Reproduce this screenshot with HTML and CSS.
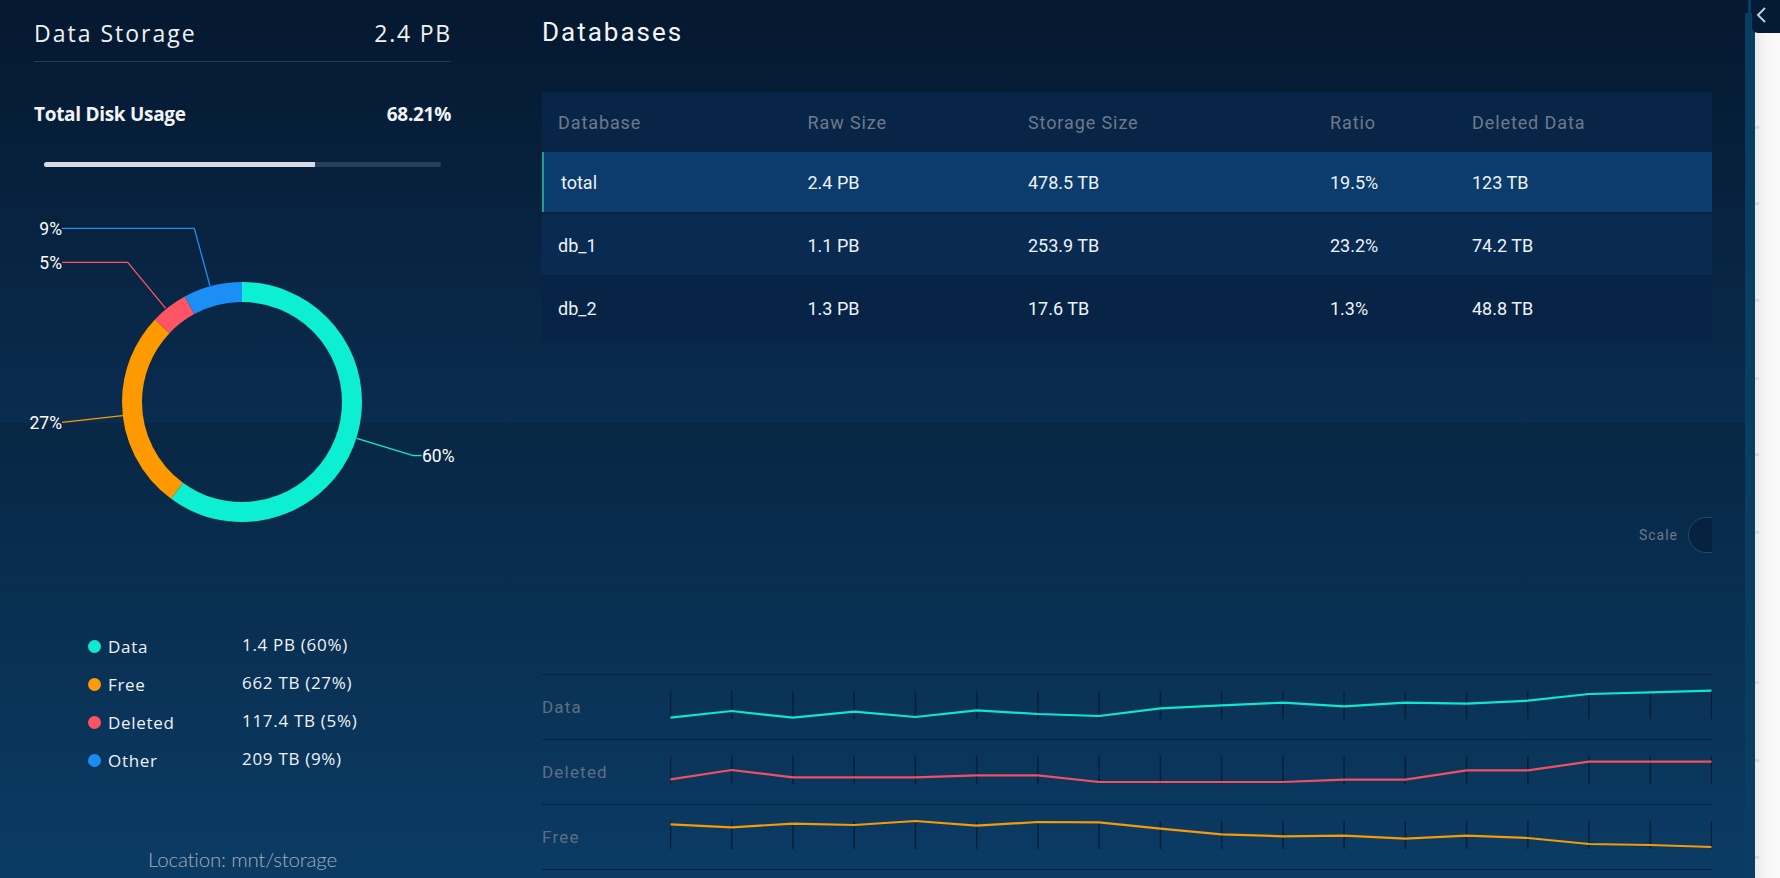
FILE: index.html
```html
<!DOCTYPE html>
<html lang="en">
<head>
<meta charset="utf-8">
<title>Data Storage</title>
<link rel="stylesheet" href="styles.css">
</head>
<body>
<div class="app">
  <main class="main">
    <section class="storage">
      <header class="ds-head"><span>Data Storage</span><span>2.4 PB</span></header>
      <div class="usage"><span>Total Disk Usage</span><span>68.21%</span></div>
      <div class="bar"><div class="bar-fill" style="width:68.21%"></div></div>
      <svg class="donut" width="485" height="340" viewBox="0 190 485 340">
        <g fill="none" stroke-width="20" transform="rotate(-90 242 402)">
          <circle cx="242" cy="402" r="110" stroke="#0cefd2" stroke-dasharray="414.69 691.15" stroke-dashoffset="0"/>
          <circle cx="242" cy="402" r="110" stroke="#fe9900" stroke-dasharray="186.61 691.15" stroke-dashoffset="-414.69"/>
          <circle cx="242" cy="402" r="110" stroke="#fe5463" stroke-dasharray="34.56 691.15" stroke-dashoffset="-601.3"/>
          <circle cx="242" cy="402" r="110" stroke="#1b8ff5" stroke-dasharray="62.2 691.15" stroke-dashoffset="-635.86"/>
        </g>
        <g fill="none" stroke-width="1.3">
          <polyline points="62,228.3 194.3,228.3 210,286" stroke="#1b8ff5"/>
          <polyline points="62,262.3 127.7,262.3 165.7,308.3" stroke="#fe5463"/>
          <polyline points="62,422.3 122.7,415.7" stroke="#fe9900"/>
          <polyline points="356.7,438.3 413.3,455.7 421.7,455.7" stroke="#0cefd2"/>
        </g>
        <g class="donut-labels">
          <text x="62" y="234.5" text-anchor="end">9%</text>
          <text x="62" y="268.5" text-anchor="end">5%</text>
          <text x="62" y="428.5" text-anchor="end">27%</text>
          <text x="422" y="462">60%</text>
        </g>
      </svg>
      <ul class="legend">
        <li><span class="key"><i class="dot dot-data"></i>Data</span><span class="val">1.4 PB (60%)</span></li>
        <li><span class="key"><i class="dot dot-free"></i>Free</span><span class="val">662 TB (27%)</span></li>
        <li><span class="key"><i class="dot dot-deleted"></i>Deleted</span><span class="val">117.4 TB (5%)</span></li>
        <li><span class="key"><i class="dot dot-other"></i>Other</span><span class="val">209 TB (9%)</span></li>
      </ul>
      <p class="location">Location: mnt/storage</p>
    </section>

    <section class="dbs">
      <h1 class="dbs-title">Databases</h1>
      <div class="table">
        <div class="tr th"><span>Database</span><span>Raw Size</span><span>Storage Size</span><span>Ratio</span><span>Deleted Data</span></div>
        <div class="tr row-active"><span class="name">total</span><span>2.4 PB</span><span>478.5 TB</span><span>19.5%</span><span>123 TB</span></div>
        <div class="tr row-1"><span>db_1</span><span>1.1 PB</span><span>253.9 TB</span><span>23.2%</span><span>74.2 TB</span></div>
        <div class="tr row-2"><span>db_2</span><span>1.3 PB</span><span>17.6 TB</span><span>1.3%</span><span>48.8 TB</span></div>
      </div>
      <div class="scale-row"><span class="scale-label">Scale</span><span class="toggle"></span></div>
      <div class="charts">
        <div class="chart-row">
          <span class="chart-label">Data</span>
          <svg class="spark" width="1042" height="64" viewBox="0 0 1042 64">
            <path class="ticks" d="M0.5 16V44M61.7 16V44M123 16V44M184.2 16V44M245.4 16V44M306.7 16V44M367.9 16V44M429.1 16V44M490.4 16V44M551.6 16V44M612.9 16V44M674.1 16V44M735.3 16V44M796.6 16V44M857.8 16V44M919 16V44M980.3 16V44M1041.5 16V44"/>
            <polyline class="line" stroke="#10e6cc" points="0.5,42.7 61.7,36 123,42.7 184.2,36.7 245.4,42 306.7,35.3 367.9,39 429.1,41 490.4,33.3 551.6,30.3 612.9,27.7 674.1,31.3 735.3,27.7 796.6,28.7 857.8,25.7 919,19 980.3,17.3 1041.5,15.7"/>
          </svg>
        </div>
        <div class="chart-row">
          <span class="chart-label">Deleted</span>
          <svg class="spark" width="1042" height="64" viewBox="0 0 1042 64">
            <path class="ticks" d="M0.5 16V44M61.7 16V44M123 16V44M184.2 16V44M245.4 16V44M306.7 16V44M367.9 16V44M429.1 16V44M490.4 16V44M551.6 16V44M612.9 16V44M674.1 16V44M735.3 16V44M796.6 16V44M857.8 16V44M919 16V44M980.3 16V44M1041.5 16V44"/>
            <polyline class="line" stroke="#f2505f" points="0.5,39.3 61.7,30 123,37.3 184.2,37.3 245.4,37.3 306.7,35.3 367.9,35.3 429.1,42 490.4,42 551.6,42 612.9,42 674.1,39.7 735.3,39.7 796.6,30.3 857.8,30.3 919,21.7 980.3,21.7 1041.5,21.7"/>
          </svg>
        </div>
        <div class="chart-row">
          <span class="chart-label">Free</span>
          <svg class="spark" width="1042" height="64" viewBox="0 0 1042 64">
            <path class="ticks" d="M0.5 16V44M61.7 16V44M123 16V44M184.2 16V44M245.4 16V44M306.7 16V44M367.9 16V44M429.1 16V44M490.4 16V44M551.6 16V44M612.9 16V44M674.1 16V44M735.3 16V44M796.6 16V44M857.8 16V44M919 16V44M980.3 16V44M1041.5 16V44"/>
            <polyline class="line" stroke="#f59a08" points="0.5,19.3 61.7,22.3 123,18.7 184.2,20 245.4,16 306.7,20.7 367.9,17 429.1,17.3 490.4,23.7 551.6,29.3 612.9,31.3 674.1,30.7 735.3,33.7 796.6,30.7 857.8,33 919,39 980.3,40 1041.5,42"/>
          </svg>
        </div>
      </div>
    </section>
  </main>
  <div class="rail"><div class="rail-stem"></div><div class="rail-bar"></div></div>
  <aside class="side">
    <i class="mark m1"></i><i class="mark m2"></i><i class="mark m3"></i><i class="mark m4"></i><i class="mark m5"></i><i class="mark m6"></i><i class="mark m7"></i><i class="mark m8"></i><i class="mark m9"></i>
  </aside>
  <button class="tab" type="button" aria-label="Collapse">
    <svg width="28" height="33" viewBox="0 0 28 33"><polyline points="13,8 6,15 13,22" fill="none" stroke="#c4ccd6" stroke-width="2"/></svg>
  </button>
</div>
</body>
</html>
```

FILE: styles.css
```css
* { box-sizing: border-box; margin: 0; padding: 0; }
html, body { width: 1780px; height: 878px; overflow: hidden; }
body {
  background: #061a33;
  font-family: "Open Sans", "Liberation Sans", sans-serif;
  color: #eef2f6;
}
.app { position: relative; display: flex; width: 1780px; height: 878px; }
.main {
  display: flex;
  width: 1745px;
  height: 878px;
  background: linear-gradient(180deg, #05182f 0px, #0a2c4f 423px, #072744 423px, #0b3b64 878px);
}

/* ---- left: data storage ---- */
.storage { width: 485px; flex: none; display: flex; flex-direction: column; }
.ds-head {
  display: flex; justify-content: space-between;
  margin: 0 34px; padding: 18px 0 13px;
  border-bottom: 1px solid #263b56;
  font-size: 23px; line-height: 30px; letter-spacing: 2px; color: #eef2f7;
}
.ds-head span:last-child { letter-spacing: 1.8px; margin-right: -1px; }
.usage {
  display: flex; justify-content: space-between;
  margin: 40px 34px 0;
  font-size: 19px; font-weight: 700; line-height: 24px; letter-spacing: -0.3px; color: #f2f4f8;
}
.bar { margin: 36px 44px 0; height: 5px; border-radius: 3px; background: #2a3d56; overflow: hidden; }
.bar-fill { height: 100%; background: #d6dbe7; }
.donut { display: block; margin-top: 23px; }
.donut-labels text { font-family: Roboto, "Liberation Sans", sans-serif; font-size: 17.5px; fill: #ffffff; }

.legend { list-style: none; margin-top: 97px; padding-left: 88px; }
.legend li {
  display: grid; grid-template-columns: 154px 1fr; align-items: center;
  height: 38px; font-size: 17px; letter-spacing: 0.7px; color: #eef2f7;
}
.key { display: flex; align-items: center; gap: 7px; }
.val { margin-top: -3px; }
.dot { display: block; width: 13px; height: 13px; border-radius: 50%; }
.dot-data { background: #0cebd0; }
.dot-free { background: #fe9a05; }
.dot-deleted { background: #fe5262; }
.dot-other { background: #1a8df2; }
.location {
  margin-top: 68px; text-align: center; line-height: 24px;
  font-family: Lato, "Open Sans", sans-serif; font-weight: 300; font-size: 20.5px;
  letter-spacing: -0.2px; color: #a3adbb;
}

/* ---- right: databases ---- */
.dbs {
  flex: 1; display: flex; flex-direction: column;
  padding: 0 33px 0 57px;
  font-family: Roboto, "Liberation Sans", sans-serif;
}
.dbs-title {
  margin-top: 14px; font-size: 26px; font-weight: 400; line-height: 36px;
  letter-spacing: 2px; color: #f2f5f9;
}
.table { margin-top: 42px; background: #072446; }
.tr {
  display: grid;
  grid-template-columns: 249.5px 220.5px 302px 142px 1fr;
  align-items: center; height: 60px; padding-left: 16px;
  font-size: 18px; color: #eef2f7;
}
.th { background: #082548; color: #6c7a8c; letter-spacing: 0.9px; }
.row-active { background: #0b3c6b; box-shadow: inset 2px 0 0 #1aa190; }
.row-active .name { padding-left: 3px; }
.row-1 { margin-top: 3px; background: #092b52; }
.row-2 { height: 66px; background: #072446; }

.scale-row {
  display: flex; justify-content: flex-end; align-items: center; gap: 10px;
  margin-top: 176px; height: 36px; overflow: hidden;
}
.scale-label { font-size: 14px; letter-spacing: 1px; color: #6b7a8d; }
.toggle {
  width: 50px; height: 36px; margin-right: -26px; flex: none;
  border-radius: 18px; border: 1px solid #28486a; background: #062241;
}

.charts { margin-top: 121px; border-top: 1px solid #05203b; }
.chart-row { display: flex; align-items: center; height: 65px; border-bottom: 1px solid #05203b; }
.chart-label { width: 128px; flex: none; font-size: 17px; letter-spacing: 1.2px; color: #5f6f83; }
.spark { display: block; flex: none; }
.ticks { stroke: #06203a; stroke-width: 1.5; fill: none; }
.line { fill: none; stroke-width: 2.2; stroke-linejoin: round; }

/* ---- right edge ---- */
.rail { width: 10px; flex: none; display: flex; flex-direction: column; }
.rail-stem { width: 3px; height: 13px; margin-left: 3px; background: #0a3d62; }
.rail-bar { flex: 1; background: #0a3d62; }
.side {
  width: 25px; flex: none; display: flex; flex-direction: column;
  background: linear-gradient(90deg, #ebebeb 0, #f6f6f6 45%, #fafafa 100%);
}
.mark { display: block; width: 4px; height: 3px; background: #dadada; }
.m1 { margin-top: 126px; }
.m2 { margin-top: 73px; }
.m3 { margin-top: 94px; }
.m4 { margin-top: 75px; }
.m5 { margin-top: 73px; }
.m6 { margin-top: 75px; }
.m7 { margin-top: 147px; }
.m8 { margin-top: 75px; }
.m9 { margin-top: 94px; }
.tab {
  position: absolute; top: 0; right: 0;
  width: 28px; height: 33px; border: 0; padding: 0;
  background: #051a35; border-bottom-left-radius: 6px;
  display: block;
}
.tab svg { display: block; }
```
